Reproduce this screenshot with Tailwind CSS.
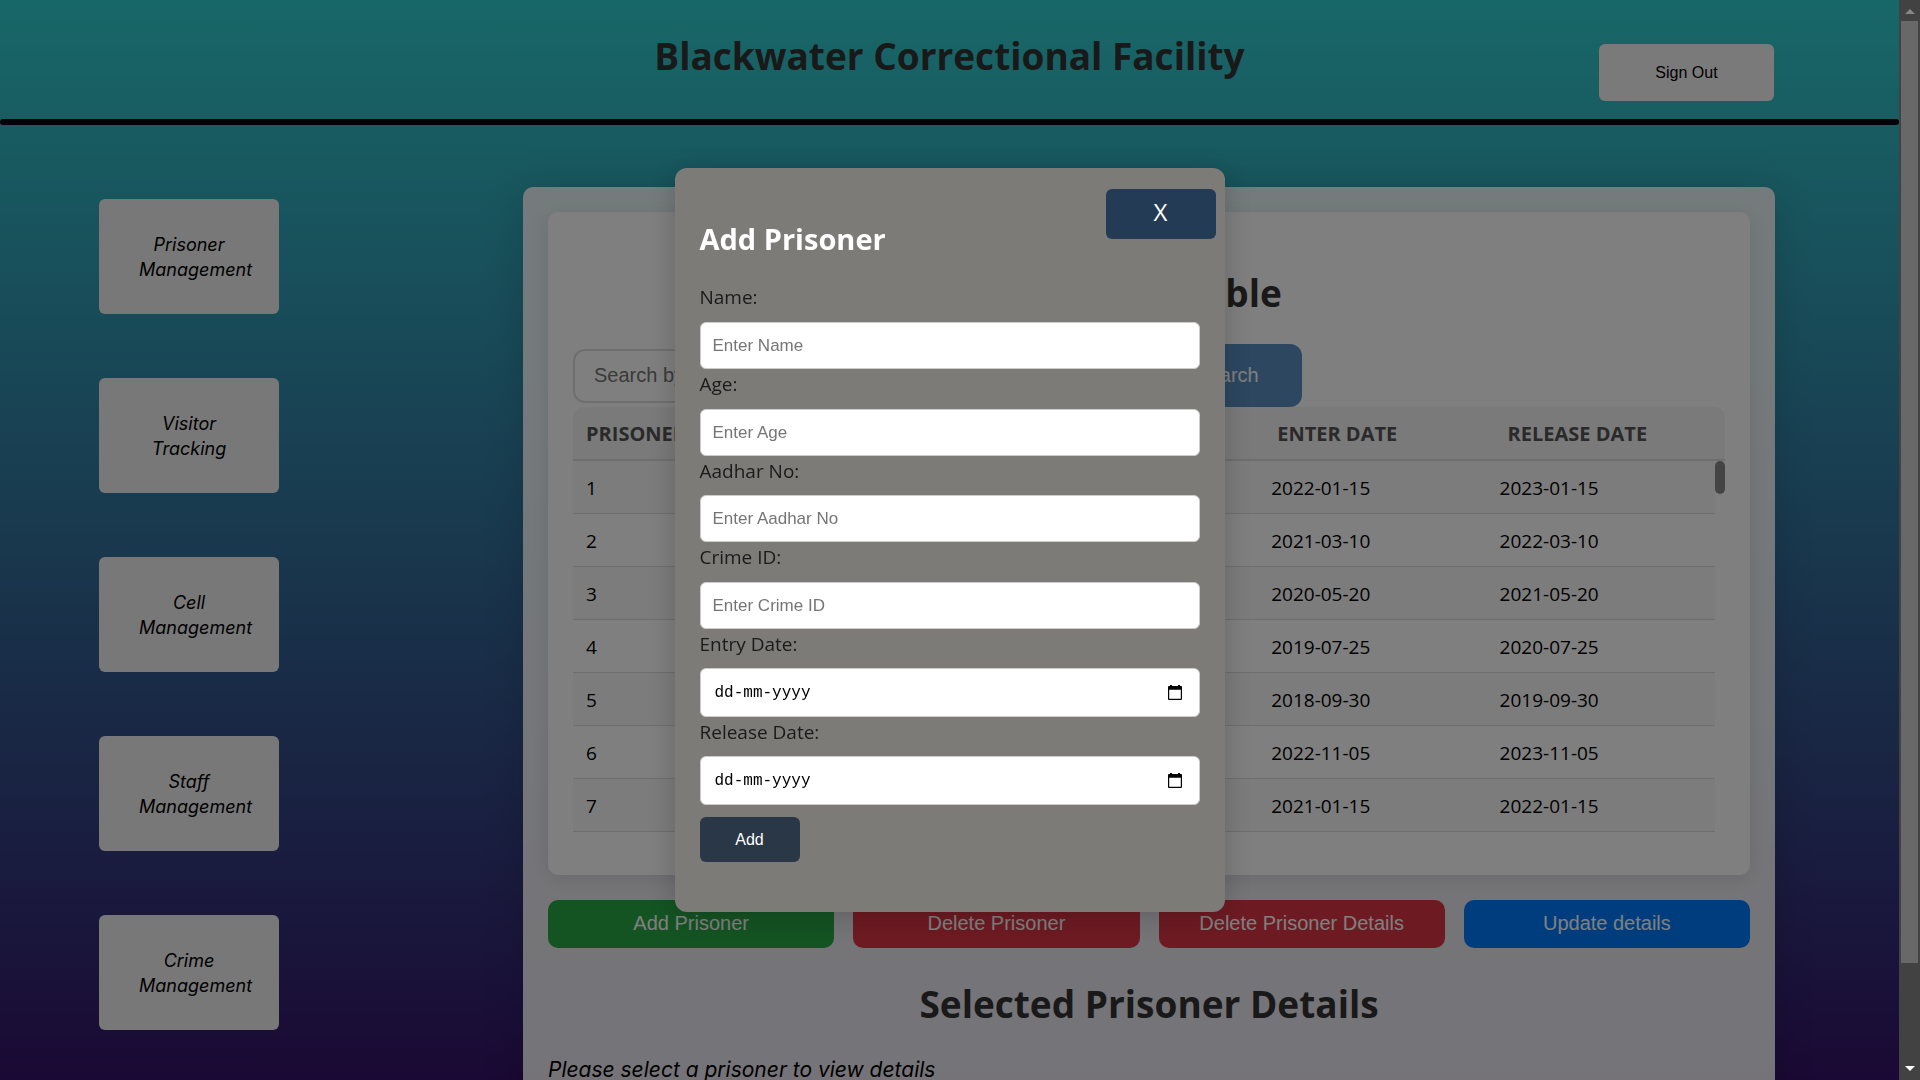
<!DOCTYPE html>
<html lang="en">
<head>
<meta charset="utf-8">
<title>Blackwater Correctional Facility</title>
<script src="https://cdn.jsdelivr.net/npm/@tailwindcss/browser@4"></script>
</head>
<body class="h-screen overflow-hidden bg-linear-to-b/srgb from-[#30cfd0] to-[#341268] font-['Open_Sans','Noto_Sans',sans-serif] text-black">

<div class="flex h-screen">
  <div class="h-screen min-w-0 flex-1 overflow-hidden">
    <header class="relative flex h-[119px] items-start justify-center pt-7">
      <h1 class="text-[37px] leading-14 font-bold text-[#333]">Blackwater Correctional Facility</h1>
      <button type="button" class="absolute top-11 right-[125px] h-[57px] w-[175px] rounded-md bg-[#f4f4f4] font-['Liberation_Sans',sans-serif] text-base">Sign Out</button>
    </header>
    <hr class="h-1.5 rounded-full border-0 bg-[#06000f]">

    <div class="flex items-start gap-[244px] pr-[124px] pl-[99px]">
      <nav class="flex flex-col gap-16 pt-[74px] font-['Inter',sans-serif] text-lg leading-[25px] italic [font-feature-settings:'cv11']">
        <button type="button" class="h-[115px] w-[180px] rounded-md bg-[#f0f0f0] px-10">Prisoner Management</button>
        <button type="button" class="h-[115px] w-[180px] rounded-md bg-[#f0f0f0] px-10">Visitor Tracking</button>
        <button type="button" class="h-[115px] w-[180px] rounded-md bg-[#f0f0f0] px-10">Cell Management</button>
        <button type="button" class="h-[115px] w-[180px] rounded-md bg-[#f0f0f0] px-10">Staff Management</button>
        <button type="button" class="h-[115px] w-[180px] rounded-md bg-[#f0f0f0] px-10">Crime Management</button>
      </nav>

      <main class="mt-[62px] min-w-0 flex-1 rounded-[10px] bg-white/90 px-[25px] pt-[25px] pb-40 shadow-[0_0_40px_rgba(0,0,0,0.15)]">
        <section class="h-[663px] rounded-[10px] bg-white px-[25px] pt-[53px] shadow-[0_4px_20px_rgba(0,0,0,0.1)]">
          <h2 class="text-center text-[37px] leading-14 font-bold text-[#333]">Prisoner Table</h2>
          <form class="mt-[23px] flex h-[63px] w-[729px] items-center justify-between font-['Liberation_Sans',sans-serif] text-xl">
            <input type="text" aria-label="Search" placeholder="Search by name" class="h-[54px] w-[560px] rounded-xl border-2 border-[#ddd] px-[19px] placeholder:text-[#757575]">
            <button type="submit" class="h-[63px] w-[150px] rounded-xl bg-[#5a8ec2] pb-0.5 text-white">Search</button>
          </form>
          <table class="block w-full text-left">
            <thead class="block rounded-t-[10px] border-b-2 border-[#ddd] bg-[#f4f4f4]">
              <tr class="grid h-[52px] grid-cols-5 items-center pt-0.5 text-xl font-bold text-[#555]">
                <th class="px-[13px]" scope="col">PRISONER ID</th><th class="px-[13px]" scope="col">NAME</th><th class="px-[13px]" scope="col">AGE</th><th class="px-[13px]" scope="col">ENTER DATE</th><th class="px-[13px]" scope="col">RELEASE DATE</th>
              </tr>
            </thead>
            <tbody id="rows" class="relative block pr-2.5 text-[19px]"></tbody>
          </table>
        </section>

        <div class="mt-[25px] grid grid-cols-4 gap-[19px] font-['Liberation_Sans',sans-serif] text-xl text-white">
          <button type="button" class="h-12 rounded-[10px] bg-[#28a745] pb-0.5">Add Prisoner</button>
          <button type="button" class="h-12 rounded-[10px] bg-[#dc3545] pb-0.5">Delete Prisoner</button>
          <button type="button" class="h-12 rounded-[10px] bg-[#dc3545] pb-0.5">Delete Prisoner Details</button>
          <button type="button" class="h-12 rounded-[10px] bg-[#007bff] pb-0.5">Update details</button>
        </div>
        <h2 class="mt-7 text-center text-[37px] leading-14 font-bold text-[#333]">Selected Prisoner Details</h2>
        <p class="mt-[22px] font-['Inter',sans-serif] text-[21px] leading-8 italic [font-feature-settings:'cv11']">Please select a prisoner to view details</p>
      </main>
    </div>
  </div>
  <div class="w-[21px]"></div>
</div>

<div class="fixed inset-0 flex items-start justify-center bg-black/50 pt-[168px] pr-[21px]">
  <div role="dialog" aria-label="Add Prisoner" class="relative h-[744px] w-[550px] rounded-xl bg-[#7d7b78] px-[25px] pt-[51px] shadow-[0_4px_30px_rgba(0,0,0,0.2)]">
    <button type="button" aria-label="Close" class="absolute top-[21px] right-[9px] h-[50px] w-[110px] rounded-md bg-[#243b55] pb-1 text-2xl text-white">X</button>
    <h2 class="text-[29px] leading-10 font-bold text-white">Add Prisoner</h2>
    <form class="mt-[22px] flex flex-col text-[19px] text-[#1a1a1a]">
      <label for="name" class="h-[41px] leading-8">Name:</label>
      <input id="name" type="text" placeholder="Enter Name" class="h-[47px] rounded-md border border-[#ccc] bg-white px-3 font-['Liberation_Sans',sans-serif] text-[17px] placeholder:text-[#757575]">
      <label for="age" class="h-10 leading-[30px]">Age:</label>
      <input id="age" type="text" placeholder="Enter Age" class="h-[47px] rounded-md border border-[#ccc] bg-white px-3 font-['Liberation_Sans',sans-serif] text-[17px] placeholder:text-[#757575]">
      <label for="aadhar" class="h-[39px] leading-[30px]">Aadhar No:</label>
      <input id="aadhar" type="text" placeholder="Enter Aadhar No" class="h-[47px] rounded-md border border-[#ccc] bg-white px-3 font-['Liberation_Sans',sans-serif] text-[17px] placeholder:text-[#757575]">
      <label for="crime" class="h-10 leading-[30px]">Crime ID:</label>
      <input id="crime" type="text" placeholder="Enter Crime ID" class="h-[47px] rounded-md border border-[#ccc] bg-white px-3 font-['Liberation_Sans',sans-serif] text-[17px] placeholder:text-[#757575]">
      <label for="entry" class="h-[39px] leading-[30px]">Entry Date:</label>
      <div class="flex h-[49px] items-center rounded-md border border-[#ccc] bg-white pr-4 pl-3.5">
        <input id="entry" type="text" placeholder="dd-mm-yyyy" class="min-w-0 flex-1 font-['Liberation_Mono',monospace] text-base placeholder:text-black">
        <svg class="size-4" viewBox="0 0 16 16" fill="black" aria-hidden="true"><path d="M3 0h2v1h6V0h2v1h1a1 1 0 0 1 1 1v12a1 1 0 0 1-1 1H2a1 1 0 0 1-1-1V2a1 1 0 0 1 1-1h1zM2.200 4.800v9h11.600v-9z"/></svg>
      </div>
      <label for="release" class="h-[39px] leading-[30px]">Release Date:</label>
      <div class="flex h-[49px] items-center rounded-md border border-[#ccc] bg-white pr-4 pl-3.5">
        <input id="release" type="text" placeholder="dd-mm-yyyy" class="min-w-0 flex-1 font-['Liberation_Mono',monospace] text-base placeholder:text-black">
        <svg class="size-4" viewBox="0 0 16 16" fill="black" aria-hidden="true"><path d="M3 0h2v1h6V0h2v1h1a1 1 0 0 1 1 1v12a1 1 0 0 1-1 1H2a1 1 0 0 1-1-1V2a1 1 0 0 1 1-1h1zM2.200 4.800v9h11.600v-9z"/></svg>
      </div>
      <button type="submit" class="mt-3 h-[45px] w-[100px] rounded-md bg-[#2a3746] font-['Liberation_Sans',sans-serif] text-base text-white">Add</button>
    </form>
  </div>
</div>

<!-- page scrollbar -->
<div class="fixed inset-y-0 right-0 flex w-[21px] flex-col items-center justify-between bg-[#424242]" aria-hidden="true">
  <svg class="h-[21px] w-2.5" viewBox="0 0 10 21" fill="#868686"><path d="M0 14L5 9l5 5z"/></svg>
  <div class="mb-auto h-[87.2%] w-[17px] bg-[#686868]"></div>
  <svg class="h-[21px] w-2.5" viewBox="0 0 10 21" fill="white"><path d="M0 7h10l-5 5z"/></svg>
</div>

<script>
  const prisoners = [
    [1, '2022-01-15', '2023-01-15'],
    [2, '2021-03-10', '2022-03-10'],
    [3, '2020-05-20', '2021-05-20'],
    [4, '2019-07-25', '2020-07-25'],
    [5, '2018-09-30', '2019-09-30'],
    [6, '2022-11-05', '2023-11-05'],
    [7, '2021-01-15', '2022-01-15']
  ];
  document.getElementById('rows').innerHTML = prisoners.map(p =>
    `<tr class="grid h-[53px] grid-cols-5 items-center border-b border-[#ddd] pt-0.5 odd:bg-[#f9f9f9]">
      <td class="px-[13px]">${p[0]}</td><td></td><td></td><td class="px-[13px]">${p[1]}</td><td class="px-[13px]">${p[2]}</td>
    </tr>`).join('') + '<tr class="absolute top-0 right-0 h-[33px] w-2.5 rounded-full bg-[#888]" aria-hidden="true"></tr>';
</script>
</body>
</html>
